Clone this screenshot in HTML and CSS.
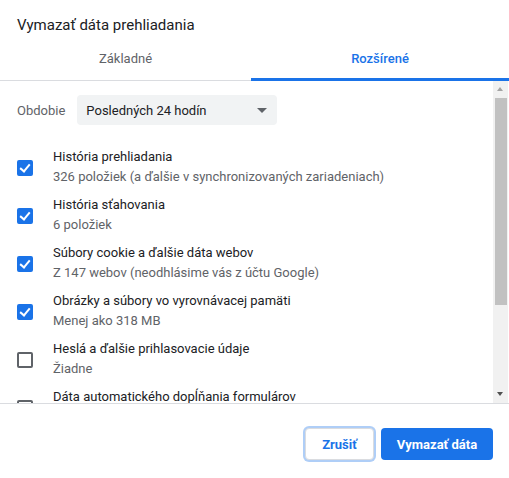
FILE: index.html
```html
<!DOCTYPE html>
<html lang="sk">
<head>
    <meta charset="UTF-8">
    <title>Vymazať dáta prehliadania</title>
    <link rel="stylesheet" href="styles.css">
</head>
<body>
<div class="dialog">
    <h1 class="dialog-title">Vymazať dáta prehliadania</h1>

    <div class="tabs">
        <div class="tab">Základné</div>
        <div class="tab active">Rozšírené</div>
    </div>

    <div class="scroll-area">
        <div class="content">
            <div class="period">
                <span class="period-label">Obdobie</span>
                <div class="select">
                    <span>Posledných 24 hodín</span>
                    <span class="select-arrow"></span>
                </div>
            </div>

            <div class="item">
                <span class="checkbox checked"></span>
                <div class="item-text">
                    <div class="item-title">História prehliadania</div>
                    <div class="item-sub">326 položiek (a ďalšie v synchronizovaných zariadeniach)</div>
                </div>
            </div>
            <div class="item">
                <span class="checkbox checked"></span>
                <div class="item-text">
                    <div class="item-title">História sťahovania</div>
                    <div class="item-sub">6 položiek</div>
                </div>
            </div>
            <div class="item">
                <span class="checkbox checked"></span>
                <div class="item-text">
                    <div class="item-title">Súbory cookie a ďalšie dáta webov</div>
                    <div class="item-sub">Z 147 webov (neodhlásime vás z účtu Google)</div>
                </div>
            </div>
            <div class="item">
                <span class="checkbox checked"></span>
                <div class="item-text">
                    <div class="item-title">Obrázky a súbory vo vyrovnávacej pamäti</div>
                    <div class="item-sub">Menej ako 318 MB</div>
                </div>
            </div>
            <div class="item">
                <span class="checkbox"></span>
                <div class="item-text">
                    <div class="item-title">Heslá a ďalšie prihlasovacie údaje</div>
                    <div class="item-sub">Žiadne</div>
                </div>
            </div>
            <div class="item">
                <span class="checkbox"></span>
                <div class="item-text">
                    <div class="item-title">Dáta automatického dopĺňania formulárov</div>
                    <div class="item-sub">&nbsp;</div>
                </div>
            </div>
        </div>

        <!-- fake scrollbar -->
        <div class="scrollbar">
            <div class="scroll-btn up"></div>
            <div class="scroll-thumb"></div>
            <div class="scroll-track"></div>
            <div class="scroll-btn down"></div>
        </div>
    </div>

    <div class="footer">
        <button class="btn btn-cancel">Zrušiť</button>
        <button class="btn btn-primary">Vymazať dáta</button>
    </div>
</div>
</body>
</html>
```
FILE: styles.css
```css
body {
    margin: 0;
    font-family: Roboto, 'Liberation Sans', sans-serif;
    color: #202124;
    background-color: #ffffff;
}

.dialog {
    width: 509px;
    height: 478px;
    display: flex;
    flex-direction: column;
    overflow: hidden;
}

.dialog-title {
    margin: 0;
    padding: 15px 17px 0;
    font-size: 15px;
    font-weight: 400;
    line-height: 20px;
    color: #202124;
}

.tabs {
    display: grid;
    grid-template-columns: 251px 1fr;
    margin-top: 7px;
    border-bottom: 1px solid #dadce0;
}

.tab {
    height: 36px;
    line-height: 34px;
    text-align: center;
    font-size: 13px;
    font-weight: 400;
    color: #5f6368;
    border-bottom: 3px solid transparent;
    margin-bottom: -1px;
}

.tab.active {
    color: #1a73e8;
    font-weight: 500;
    border-bottom-color: #1a73e8;
}

.scroll-area {
    height: 322px;
    display: flex;
    border-bottom: 1px solid #dadce0;
}

.content {
    flex: 1;
    overflow: hidden;
    padding: 14px 0 0 17px;
}

.period {
    display: flex;
    align-items: center;
    gap: 12px;
    font-size: 13px;
}

.period-label {
    color: #5f6368;
}

.select {
    width: 182px;
    height: 30px;
    padding: 0 9px;
    display: flex;
    align-items: center;
    justify-content: space-between;
    background-color: #f1f3f4;
    border-radius: 4px;
    color: #202124;
}

.select-arrow {
    width: 0;
    height: 0;
    margin-right: 1px;
    border-left: 5px solid transparent;
    border-right: 5px solid transparent;
    border-top: 5px solid #5f6368;
}

.item {
    display: flex;
    align-items: flex-start;
    height: 48px;
}

.period + .item {
    margin-top: 22px;
}

.checkbox {
    box-sizing: border-box;
    width: 16px;
    height: 16px;
    margin-top: 13px;
    margin-right: 20px;
    border: 2px solid #5f6368;
    border-radius: 2px;
    position: relative;
}

.checkbox.checked {
    background-color: #1a73e8;
    border-color: #1a73e8;
}

.checkbox.checked::after {
    content: "";
    position: absolute;
    left: 3px;
    top: 0px;
    width: 4px;
    height: 8px;
    border-right: 2px solid #ffffff;
    border-bottom: 2px solid #ffffff;
    transform: rotate(40deg);
}

.item-text {
    font-size: 13px;
    line-height: 20px;
}

.item-title {
    color: #202124;
}

.item-sub {
    color: #5f6368;
}

.scrollbar {
    width: 15px;
    margin-right: 1px;
    display: flex;
    flex-direction: column;
    background-color: #f1f1f1;
}

.scroll-btn {
    height: 17px;
    position: relative;
}

.scroll-btn::after {
    content: "";
    position: absolute;
    left: 4px;
    top: 6px;
    border-left: 3px solid transparent;
    border-right: 3px solid transparent;
}

.scroll-btn.up::after {
    border-bottom: 4px solid #a3a3a3;
}

.scroll-btn.down::after {
    border-top: 4px solid #505050;
}

.scroll-thumb {
    height: 207px;
    margin: 0 1px 0 2px;
    background-color: #c1c1c1;
}

.scroll-track {
    flex: 1;
}

.footer {
    display: flex;
    justify-content: flex-end;
    gap: 7px;
    padding: 24px 16px 0;
}

.btn {
    height: 32px;
    padding: 0 15px;
    border-radius: 4px;
    font-family: Roboto, 'Liberation Sans', sans-serif;
    font-size: 13px;
    font-weight: 700;
    cursor: pointer;
}

.btn-cancel {
    background-color: #ffffff;
    color: #1a73e8;
    border: 1px solid #dadce0;
    box-shadow: 0 0 0 2px rgba(26, 115, 232, 0.35);
    width: 69px;
}

.btn-primary {
    background-color: #1a73e8;
    color: #ffffff;
    border: none;
    width: 112px;
}
```
